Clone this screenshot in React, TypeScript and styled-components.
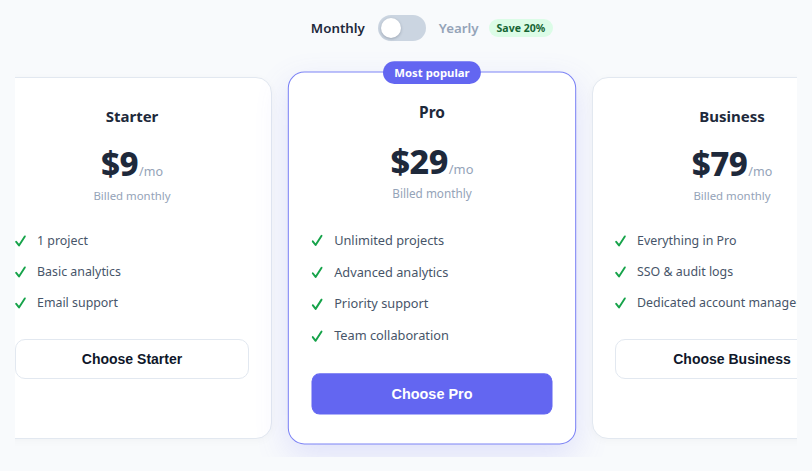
import React from "react"
import { styled, createGlobalStyle } from "styled-components"

const GlobalStyle = createGlobalStyle`
  body {
    margin: 0;
    background: #f8fafc;
    font-family: "Noto Sans", "Open Sans", sans-serif;
    color: #0f172a;
  }
`

type Plan = {
  name: string
  price: string
  features: string[]
  cta: string
  featured?: boolean
}

const plans: Plan[] = [
  {
    name: "Starter",
    price: "$9",
    features: ["1 project", "Basic analytics", "Email support"],
    cta: "Choose Starter",
  },
  {
    name: "Pro",
    price: "$29",
    features: [
      "Unlimited projects",
      "Advanced analytics",
      "Priority support",
      "Team collaboration",
    ],
    cta: "Choose Pro",
    featured: true,
  },
  {
    name: "Business",
    price: "$79",
    features: ["Everything in Pro", "SSO & audit logs", "Dedicated account manager"],
    cta: "Choose Business",
  },
]

const CheckIcon = () => (
  <svg width="11" height="12" viewBox="0 0 11 12" fill="none">
    <path
      d="M1.2 6.8 L4 10.4 L9.8 1.4"
      stroke="#16a34a"
      strokeWidth="1.9"
      strokeLinecap="round"
      strokeLinejoin="round"
    />
  </svg>
)

const S = {
  Frame: styled.div`
    margin: 0 15px;
    overflow: hidden;
    padding: 15px 0 18px;
  `,
  Stage: styled.div`
    width: 848px;
    margin-left: -7px;
    display: flex;
    flex-direction: column;
    align-items: center;
  `,
  Billing: styled.div`
    display: flex;
    align-items: center;
    gap: 13px;
    height: 26px;
  `,
  Period: styled.span<{ $active?: boolean }>`
    font-size: 13.3px;
    font-weight: 600;
    color: ${({ $active }) => ($active ? "#1e293b" : "#94a3b8")};
  `,
  Switch: styled.div`
    width: 48px;
    height: 26px;
    border-radius: 13px;
    background: #cbd5e1;
    padding: 3px;
    box-sizing: border-box;
    display: flex;
  `,
  Knob: styled.div`
    width: 20px;
    height: 20px;
    border-radius: 50%;
    background: #fff;
    box-shadow: 0 1px 3px rgba(15, 23, 42, 0.25);
  `,
  Save: styled.span`
    margin-left: -3px;
    font-size: 10.5px;
    font-weight: 700;
    color: #166534;
    background: #dcfce7;
    border-radius: 999px;
    padding: 2px 8px;
  `,
  Row: styled.div`
    display: flex;
    justify-content: center;
    gap: 20px;
    margin-top: 36px;
  `,
  Card: styled.div<{ $featured?: boolean }>`
    position: relative;
    flex: 0 0 280px;
    box-sizing: border-box;
    background: #fff;
    border-radius: 16px;
    padding: 28px 22px 28px;
    border: 1px solid ${({ $featured }) => ($featured ? "#7c83f5" : "#e2e8f0")};
    box-shadow: ${({ $featured }) =>
      $featured
        ? "0 12px 32px rgba(99, 102, 241, 0.16)"
        : "0 2px 8px rgba(15, 23, 42, 0.03)"};
    transform: ${({ $featured }) => ($featured ? "scale(1.03)" : "none")};
    text-align: center;
  `,
  Popular: styled.span`
    position: absolute;
    top: -11px;
    left: 50%;
    transform: translateX(-50%);
    height: 22px;
    line-height: 22px;
    padding: 0 11px;
    border-radius: 11px;
    background: #6366f1;
    color: #fff;
    font-size: 11px;
    font-weight: 700;
    white-space: nowrap;
  `,
  Name: styled.h3`
    margin: 0;
    font-size: 15px;
    line-height: 20px;
    font-weight: 700;
    color: #1e293b;
  `,
  Price: styled.div`
    margin-top: 18px;
    height: 40px;
    display: flex;
    justify-content: center;
    align-items: baseline;
  `,
  Amount: styled.span`
    font-size: 33px;
    line-height: 40px;
    font-weight: 800;
    letter-spacing: -0.5px;
    color: #1e293b;
  `,
  Per: styled.span`
    font-size: 12.5px;
    color: #94a3b8;
    margin-left: 1px;
  `,
  Billed: styled.div`
    margin-top: 3px;
    font-size: 11.4px;
    line-height: 18px;
    color: #94a3b8;
  `,
  Features: styled.ul`
    list-style: none;
    margin: 26px 0 0;
    padding: 0;
    display: flex;
    flex-direction: column;
    gap: 11px;
    text-align: left;
  `,
  Feature: styled.li`
    display: flex;
    align-items: center;
    gap: 11px;
    font-size: 12.4px;
    line-height: 20px;
    color: #475569;
    white-space: nowrap;
  `,
  Button: styled.button<{ $featured?: boolean }>`
    display: block;
    width: 100%;
    height: 40px;
    margin-top: 26px;
    box-sizing: border-box;
    border-radius: ${({ $featured }) => ($featured ? "8px" : "10px")};
    border: 1px solid ${({ $featured }) => ($featured ? "#6366f1" : "#e2e8f0")};
    background: ${({ $featured }) => ($featured ? "#6366f1" : "#fff")};
    color: ${({ $featured }) => ($featured ? "#fff" : "#0f172a")};
    font-family: "Liberation Sans", Arial, sans-serif;
    font-size: 14px;
    font-weight: 700;
    cursor: pointer;
  `,
}

export default function App() {
  return (
    <>
      <GlobalStyle />
      <S.Frame>
        <S.Stage>
          <S.Billing>
            <S.Period $active>Monthly</S.Period>
            <S.Switch>
              <S.Knob />
            </S.Switch>
            <S.Period>Yearly</S.Period>
            <S.Save>Save 20%</S.Save>
          </S.Billing>
          <S.Row>
            {plans.map((plan) => (
              <S.Card key={plan.name} $featured={plan.featured}>
                {plan.featured && <S.Popular>Most popular</S.Popular>}
                <S.Name>{plan.name}</S.Name>
                <S.Price>
                  <S.Amount>{plan.price}</S.Amount>
                  <S.Per>/mo</S.Per>
                </S.Price>
                <S.Billed>Billed monthly</S.Billed>
                <S.Features>
                  {plan.features.map((f) => (
                    <S.Feature key={f}>
                      <CheckIcon />
                      {f}
                    </S.Feature>
                  ))}
                </S.Features>
                <S.Button $featured={plan.featured}>{plan.cta}</S.Button>
              </S.Card>
            ))}
          </S.Row>
        </S.Stage>
      </S.Frame>
    </>
  )
}
